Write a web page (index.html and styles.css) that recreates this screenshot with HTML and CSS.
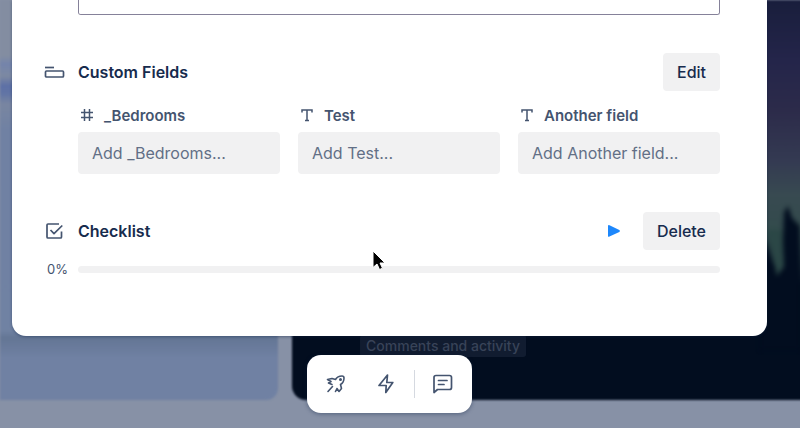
FILE: index.html
```html
<!DOCTYPE html>
<html lang="en">
<head>
<meta charset="utf-8">
<meta name="viewport" content="width=device-width, initial-scale=1">
<title>Card details</title>
<link rel="stylesheet" href="styles.css">
</head>
<body>
<div class="backdrop" aria-hidden="true">
  <div class="panel panel-list"></div>
  <div class="panel panel-photo">
    <svg class="trees" viewBox="0 0 40 150" preserveAspectRatio="none">
      <path d="M0 40 L6 44 L12 62 L18 72 L24 70 L23 40 L24 12 L28 6 L32 18 L40 26 V150 H0Z" fill="#020d1f"/>
      <path d="M7 30 L22 30 L24 66 L17 76Z" fill="#2b4746"/>
    </svg>
  </div>
</div>
<div class="stage">
  <main class="card">
    <textarea class="editor" aria-label="Description"></textarea>

    <section class="section fields-section">
      <header class="row">
        <svg class="icon" viewBox="0 0 22 20" fill="none" stroke="#44546f" stroke-width="1.700">
          <path d="M1 5.500H10"/><rect x="1.500" y="9" width="18" height="6" rx="1"/>
        </svg>
        <h2>Custom Fields</h2>
        <button class="btn" type="button">Edit</button>
      </header>
      <div class="fields">
        <div class="field">
          <label for="f1"><svg viewBox="0 0 18 16" fill="none" stroke="#44546f" stroke-width="1.500"><path d="M3 5.500H15M3 10.500H15M6.500 2V14M11.500 2V14"/></svg>_Bedrooms</label>
          <input id="f1" type="text" placeholder="Add _Bedrooms...">
        </div>
        <div class="field">
          <label for="f2"><svg viewBox="0 0 18 16" fill="none" stroke="#44546f" stroke-width="1.500"><path d="M4 5.500V3H14V5.500M9 3V13.500M7 13.500H11"/></svg>Test</label>
          <input id="f2" type="text" placeholder="Add Test...">
        </div>
        <div class="field">
          <label for="f3"><svg viewBox="0 0 18 16" fill="none" stroke="#44546f" stroke-width="1.500"><path d="M4 5.500V3H14V5.500M9 3V13.500M7 13.500H11"/></svg>Another field</label>
          <input id="f3" type="text" placeholder="Add Another field...">
        </div>
      </div>
    </section>

    <section class="section">
      <header class="row">
        <svg class="icon" viewBox="0 0 22 20" fill="none" stroke="#44546f" stroke-width="1.700" stroke-linejoin="round">
          <path d="M15 3H4Q3 3 3 4V16Q3 17 4 17H16.500Q17.500 17 17.500 16V10.500"/><path d="M6.500 9L10 12.700L18.300 4.500"/>
        </svg>
        <h2>Checklist</h2>
        <svg class="play" viewBox="0 0 14 14" fill="#1d87fb"><path d="M1 2Q1 .5 2.500 1.200L12.300 6Q13.700 7 12.300 8L2.500 12.600Q1 13.300 1 12Z"/></svg>
        <button class="btn" type="button">Delete</button>
      </header>
      <div class="progress-row">
        <span id="pct">0%</span>
        <div class="track" role="progressbar" aria-labelledby="pct" aria-valuenow="0" aria-valuemin="0" aria-valuemax="100"></div>
      </div>
    </section>
  </main>

  <nav class="dock" aria-label="Card panels">
    <button class="tool" type="button" aria-label="Power-ups">
      <svg viewBox="0 0 24 24" fill="none" stroke="#44546f" stroke-width="1.600" stroke-linecap="round" stroke-linejoin="round">
        <path d="M11.500 7.500Q13.500 4 18 4Q20 4 20 6Q20 10.500 16.500 12.500L17.500 16.500L15 19.500L13 16.500L11.500 19.500M11.500 7.500L8 6.500L3.500 7.500L7 9.500L4.500 11L8 12.500M8.500 14.500L4 19.500"/><circle cx="16.500" cy="7.500" r=".7"/>
      </svg>
    </button>
    <button class="tool" type="button" aria-label="Automations">
      <svg viewBox="0 0 24 24" fill="none" stroke="#44546f" stroke-width="1.700" stroke-linejoin="round"><path d="M13.500 3L5 13.500H12.200L11.800 20.500L18.800 10.500H12.800Z"/></svg>
    </button>
    <span class="divider"></span>
    <button class="tool" type="button" aria-labelledby="tip">
      <span class="tooltip" id="tip">Comments and activity</span>
      <svg viewBox="0 0 24 24" fill="none" stroke="#44546f" stroke-width="1.700" stroke-linejoin="round"><path d="M3 20.500V5.500Q3 3.500 5 3.500H18.500Q20.500 3.500 20.500 5.500V15.500Q20.500 17.500 18.500 17.500H6.500Z"/><path d="M7.500 8.500H16M7.500 12.500H13" stroke-linecap="round"/></svg>
    </button>
  </nav>
</div>
<svg class="pointer" viewBox="0 0 16 22" aria-hidden="true"><path d="M2 1V17.500L6 14L8.500 19.500L11.500 18.200L9 13H14Z" fill="#000" stroke="#fff" stroke-width="1"/></svg>
</body>
</html>
```
FILE: styles.css
```css
* { box-sizing: border-box; }
body {
  margin: 0;
  min-height: 100vh;
  overflow: hidden;
  position: relative;
  background: #8791a6;
  color: #172b4d;
  font-family: Inter, "Liberation Sans", sans-serif;
}
button, input, textarea { font: inherit; color: inherit; }

/* Blurred board behind the card */
.backdrop {
  position: absolute;
  inset: 0;
  display: flex;
  gap: 14px;
  padding-bottom: 28px;
  overflow: hidden;
}
.panel { filter: blur(1px); }
.panel-list {
  flex: 0 0 278px;
  border-radius: 0 0 12px 0;
  background: linear-gradient(#838da1 0, #838da1 56px, #7484ab 64px, #7d89a2 76px, #5d70a6 86px, #6275a5 94px, #7986a1 104px, #7081a3 130px, #7082a3 330px, #647695 338px, #7081a3 358px);
}
.panel-photo {
  position: relative;
  flex: 1;
  margin-right: -8px;
  border-radius: 0 0 0 14px;
  background: linear-gradient(#191e3c 0, #24254a 60px, #2c2b4a 110px, #343a52 160px, #384a51 195px, #334b4c 230px, #020d1f 285px, #020d1f);
}
.trees {
  position: absolute;
  right: 8px;
  top: 200px;
  width: 40px;
  height: 150px;
  filter: blur(2px);
}

.stage { position: relative; z-index: 0; padding: 0 33px 14px 12px; }
.card {
  padding: 0 47px 57px 32px;
  background: #fff;
  border-radius: 0 0 14px 14px;
  box-shadow: 0 1px 3px rgba(9, 30, 66, .4);
}
.editor {
  display: block;
  width: calc(100% - 34px);
  height: 15px;
  margin-left: 34px;
  padding: 0;
  border: 1px solid #858199;
  border-top: 0;
  border-radius: 0 0 3px 3px;
  background: #fff;
  resize: none;
  outline: 0;
}
.section { padding-top: 38px; }
.row {
  display: flex;
  align-items: center;
}
.icon { width: 22px; height: 20px; margin-right: 12px; }
h2 {
  flex: 1;
  margin: 0;
  font-size: 16px;
  line-height: 24px;
  font-weight: 600;
}
.btn {
  height: 38px;
  padding: 0 14px;
  border: 0;
  border-radius: 4px;
  background: #f1f1f2;
  font-size: 16px;
  font-weight: 500;
}
.play { width: 14px; height: 14px; margin-right: 22px; }
.fields {
  display: grid;
  grid-template-columns: repeat(3, 1fr);
  gap: 18px;
  margin: 14px 0 0 34px;
}
.field label {
  display: flex;
  align-items: center;
  gap: 8px;
  height: 20px;
  margin-bottom: 7px;
  color: #44546f;
  font-size: 15px;
  font-weight: 600;
}
.field svg { width: 18px; height: 16px; }
.field input {
  display: block;
  width: 100%;
  height: 42px;
  padding: 0 14px;
  border: 0;
  border-radius: 4px;
  background: #f1f1f2;
  font-size: 16px;
}
.field input::placeholder { color: #626f86; opacity: 1; }
.progress-row {
  display: flex;
  align-items: center;
  height: 20px;
  margin-top: 9px;
  color: #44546f;
  font-size: 13px;
}
.progress-row span { width: 34px; padding-left: 3px; }
.track {
  flex: 1;
  height: 7px;
  border-radius: 4px;
  background: #f1f1f2;
}

.dock {
  display: flex;
  align-items: center;
  justify-content: center;
  width: max-content;
  height: 58px;
  margin: 19px auto 0;
  padding: 0 4px;
  border-radius: 14px;
  background: #fff;
  box-shadow: 0 1px 4px rgba(9, 30, 66, .4);
}
.tool {
  position: relative;
  display: grid;
  place-items: center;
  width: 50px;
  height: 42px;
  padding: 0;
  border: 0;
  background: none;
}
.tool svg { width: 24px; height: 24px; }
.divider {
  width: 1px;
  height: 28px;
  margin: 0 3px;
  background: #d5d9e0;
}
.tooltip {
  position: absolute;
  z-index: -1;
  bottom: 48px;
  left: 50%;
  transform: translateX(-50%);
  padding: 0 6px;
  border-radius: 3px;
  background: rgba(40, 52, 74, .4);
  color: #384358;
  font-size: 14px;
  font-weight: 500;
  line-height: 22px;
  white-space: nowrap;
}
.pointer {
  position: absolute;
  left: 371px;
  top: 250px;
  width: 16px;
  height: 22px;
}
```
